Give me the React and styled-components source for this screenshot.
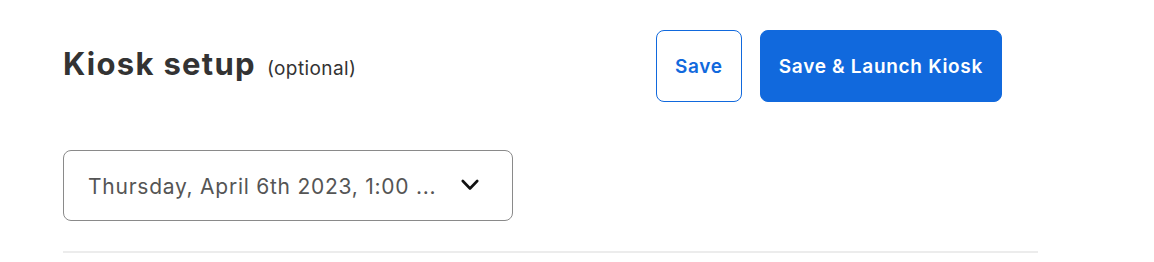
import React from "react";
import styled, { createGlobalStyle } from "styled-components";

const Global = createGlobalStyle`
  html, body { margin: 0; padding: 0; background: #fff; }
  body { font-family: Inter, "Noto Sans", sans-serif; -webkit-font-smoothing: antialiased; }
`;

const Page = styled.div`
  padding: 30px 0 0 63px;
  width: 975px;
`;

const Header = styled.div`
  display: flex;
  align-items: center;
  justify-content: space-between;
  padding-right: 36px;
`;

const TitleGroup = styled.div`
  display: flex;
  align-items: baseline;
  gap: 11px;
  padding-bottom: 6px;
`;

const Title = styled.h2`
  margin: 0;
  font-size: 31px;
  font-weight: 700;
  color: #333;
  letter-spacing: 1.3px;
`;

const Hint = styled.span`
  font-size: 19px;
  letter-spacing: 0.4px;
  color: #333;
`;

const Actions = styled.div`
  display: flex;
  gap: 18px;
`;

const Button = styled.button`
  height: 72px;
  min-width: 86px;
  padding: 0 18px;
  border-radius: 8px;
  font-family: Inter, "Noto Sans", sans-serif;
  font-size: 19px;
  font-weight: 600;
  letter-spacing: 0.7px;
  cursor: pointer;
  border: 1px solid #1169dd;
  background: ${(p) => (p.$primary ? "#1169dd" : "#fff")};
  color: ${(p) => (p.$primary ? "#fff" : "#1169dd")};
`;

const Select = styled.div`
  margin-top: 48px;
  width: 450px;
  height: 71px;
  box-sizing: border-box;
  border: 1px solid #8a8a8a;
  border-radius: 8px;
  display: flex;
  align-items: center;
  justify-content: space-between;
  padding: 2px 33px 0 24px;
`;

const SelectText = styled.span`
  font-size: 21px;
  letter-spacing: 0.75px;
  color: #555;
`;

const Chevron = styled.svg`
  width: 18px;
  height: 14px;
  margin-top: -4px;
  flex: none;
`;

const Divider = styled.hr`
  margin: 30px 0 0;
  border: 0;
  height: 2px;
  background: #ececec;
`;

export default function App() {
  return (
    <>
      <Global />
      <Page>
        <Header>
          <TitleGroup>
            <Title>Kiosk setup</Title>
            <Hint>(optional)</Hint>
          </TitleGroup>
          <Actions>
            <Button>Save</Button>
            <Button $primary>Save &amp; Launch Kiosk</Button>
          </Actions>
        </Header>
        <Select>
          <SelectText>Thursday, April 6th 2023, 1:00 ...</SelectText>
          <Chevron viewBox="0 0 18 14" fill="none">
            <path d="M1.8 3L9 10.5L16.2 3" stroke="#111" strokeWidth="2.6" strokeLinecap="round" strokeLinejoin="round" />
          </Chevron>
        </Select>
        <Divider />
      </Page>
    </>
  );
}
